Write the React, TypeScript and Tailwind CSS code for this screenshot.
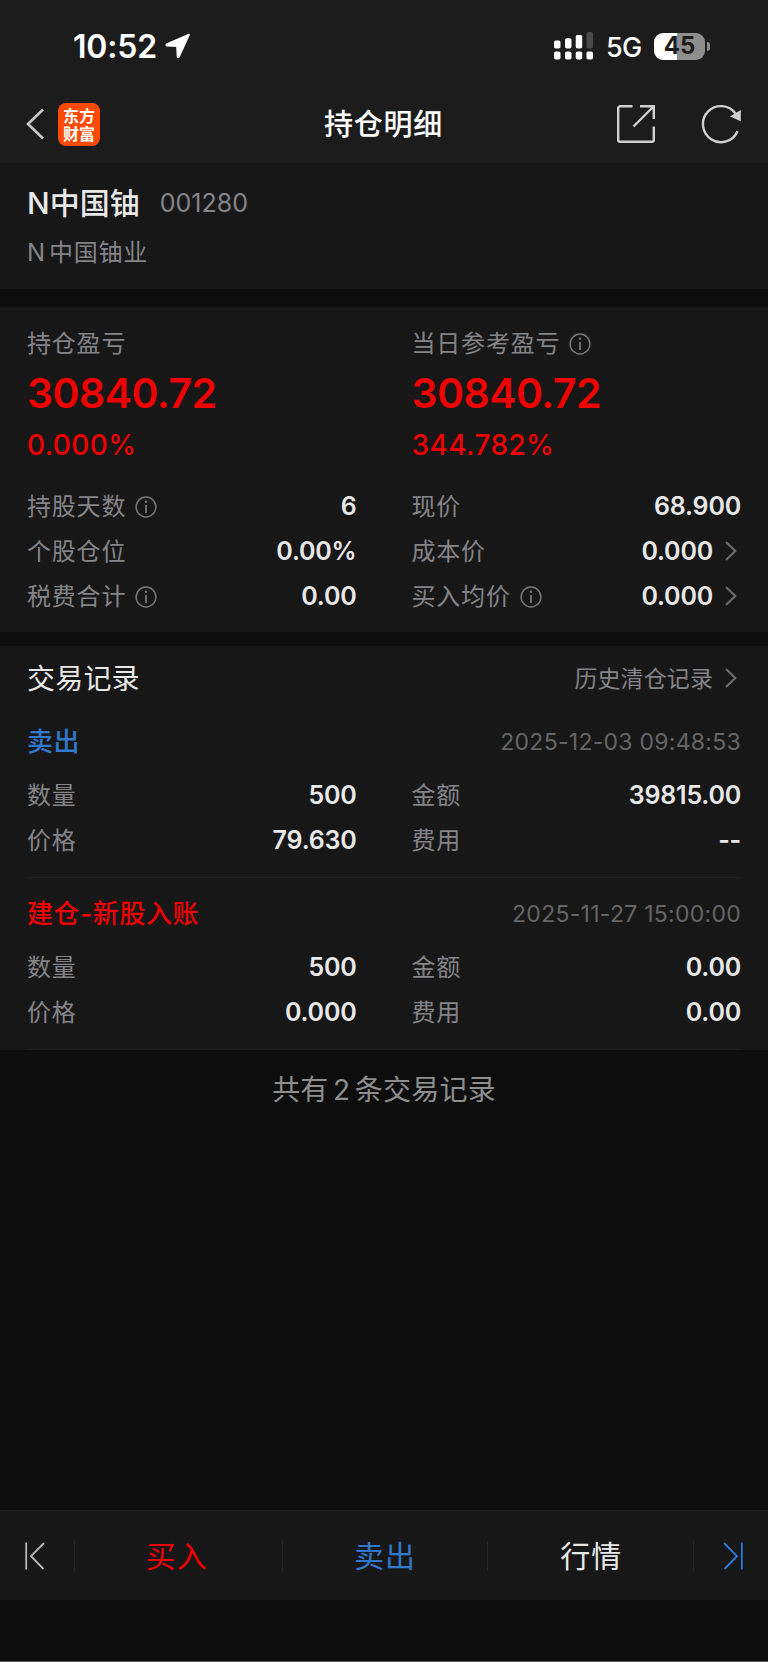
import React from 'react';

interface Field {
  label: string;
  value: string;
  info?: boolean;
  link?: boolean;
}

interface Trade {
  type: string;
  color: string;
  time: string;
  fields: Field[];
}

const positionFields: Field[] = [
  { label: '持股天数', value: '6', info: true },
  { label: '现价', value: '68.900' },
  { label: '个股仓位', value: '0.00%' },
  { label: '成本价', value: '0.000', link: true },
  { label: '税费合计', value: '0.00', info: true },
  { label: '买入均价', value: '0.000', info: true, link: true },
];

const trades: Trade[] = [
  {
    type: '卖出',
    color: 'text-[#2f78cc]',
    time: '2025-12-03 09:48:53',
    fields: [
      { label: '数量', value: '500' },
      { label: '金额', value: '39815.00' },
      { label: '价格', value: '79.630' },
      { label: '费用', value: '--' },
    ],
  },
  {
    type: '建仓-新股入账',
    color: 'text-[#ee0000]',
    time: '2025-11-27 15:00:00',
    fields: [
      { label: '数量', value: '500' },
      { label: '金额', value: '0.00' },
      { label: '价格', value: '0.000' },
      { label: '费用', value: '0.00' },
    ],
  },
];

const InfoIcon = () => (
  <svg className="ml-[9px] size-[22px] shrink-0" viewBox="0 0 22 22" fill="none" stroke="#77777a" strokeWidth="1.5">
    <circle cx="11" cy="11" r="9.9" />
    <path d="M11 9v8" strokeWidth="1.8" />
    <circle cx="11" cy="5.8" r="1.2" fill="#77777a" stroke="none" />
  </svg>
);

const ChevronIcon = () => (
  <svg className="mb-0.5 ml-3 mr-1 h-5 w-3 shrink-0" viewBox="0 0 12 20" fill="none" stroke="#6b6b6b" strokeWidth="2.2">
    <path d="M1 1l9.3 9L1 19" />
  </svg>
);

const StatusBar = () => (
  <div className="flex h-[92px] items-center justify-between pl-[73px] pr-[58px] text-white">
    <div className="flex items-center">
      <span className="pt-[2px] text-[32px] font-semibold leading-none tracking-[-0.2px]">10:52</span>
      <svg className="ml-2 size-[26px]" viewBox="0 0 26 26" fill="#fff">
        <path d="M23.2.9 1.7 10.3C-.3 11.2.3 13.4 2.2 13.5l9 .4.5 9.4c.1 2.1 2.4 2.4 3.2.5L24.6 2.6C25.2 1.2 24.4.4 23.2.9Z" />
      </svg>
    </div>
    <div className="flex items-center">
      <svg className="h-[28px] w-[39px]" viewBox="0 0 39 28" fill="#fff">
        <rect x="0" y="8.5" width="6.5" height="8" rx="1.8" />
        <rect x="11" y="6.3" width="6.5" height="10.2" rx="1.8" />
        <rect x="21.7" y="3" width="6.5" height="13.5" rx="1.8" />
        <rect x="32.5" y="0" width="6.5" height="16.5" rx="1.8" fill="#4a4a4a" />
        <rect x="0" y="19.5" width="6.5" height="8" rx="1.8" />
        <rect x="11" y="19.5" width="6.5" height="8" rx="1.8" />
        <rect x="21.7" y="19.5" width="6.5" height="8" rx="1.8" />
        <rect x="32.5" y="19.5" width="6.5" height="8" rx="1.8" />
      </svg>
      <span className="ml-[13px] w-[36px] pt-[2px] text-[27px] font-medium leading-none tracking-[-0.8px]">5G</span>
      <div className="ml-3 flex h-[27px] w-[51px] items-center justify-center rounded-[9px] bg-linear-to-r from-white from-45% to-[#8e8e8e] to-45% text-[24px] font-bold leading-none text-[#1c1c1c]">
        45
      </div>
      <div className="ml-[2px] h-[9px] w-[3px] rounded-r-full bg-[#8e8e8e]" />
    </div>
  </div>
);

const NavBar = () => (
  <div className="flex h-[64px] items-center justify-between pl-[26px] pr-[27px]">
    <div className="flex w-[150px] items-center">
      <svg className="h-[32px] w-[18px]" viewBox="0 0 18 32" fill="none" stroke="#c8c8c8" strokeWidth="2.6">
        <path d="M17 1.5 2 16l15 14.5" />
      </svg>
      <div className="ml-[14px] flex h-[43px] w-[42px] items-center justify-center rounded-[8px] bg-[#ff4a05]">
        <span className="w-[32px] break-all font-['Noto_Sans_CJK_SC',sans-serif] text-[16px] font-bold leading-[18px] text-white">东方财富</span>
      </div>
    </div>
    <h1 className="text-[29px] font-medium leading-none tracking-[0.8px] text-white">持仓明细</h1>
    <div className="flex w-[150px] items-center justify-end gap-[45px]">
      <svg className="size-[40px]" viewBox="0 0 40 40" fill="none" stroke="#d0d0d0" strokeWidth="2.4">
        <path d="M16.5 2.2H4.2a2 2 0 0 0-2 2v31.6a2 2 0 0 0 2 2h31.6a2 2 0 0 0 2-2V22.5M24 2.2h13.8V15M37.5 2.5 17.5 22.5" />
      </svg>
      <svg className="size-[40px]" viewBox="0 0 40 40" fill="none" stroke="#d0d0d0" strokeWidth="2.4">
        <path d="M36.5 27.2A18 18 0 1 1 34.5 9.5" />
        <path d="M39.8 6v11.2L29 12.5Z" fill="#d0d0d0" stroke="none" />
      </svg>
    </div>
  </div>
);

const FieldGrid: React.FC<{ fields: Field[] }> = ({ fields }) => (
  <div className="grid grid-cols-2 gap-x-[55px]">
    {fields.map((f) => (
      <div key={f.label} className="flex h-[45px] items-center">
        <span className="text-[24px] leading-none tracking-[0.8px] text-[#848488]">{f.label}</span>
        {f.info && <InfoIcon />}
        <span className="ml-auto text-[25px] font-semibold leading-none tracking-[-0.2px] text-[#e8e8e8]">{f.value}</span>
        {f.link && <ChevronIcon />}
      </div>
    ))}
  </div>
);

const Profit: React.FC<{ label: string; amount: string; rate: string; info?: boolean }> = ({ label, amount, rate, info }) => (
  <div>
    <div className="flex h-[37px] items-center">
      <span className="text-[24px] leading-none tracking-[0.8px] text-[#848488]">{label}</span>
      {info && <InfoIcon />}
    </div>
    <p className="h-[63px] text-[41px] font-semibold leading-[62px] tracking-[-0.55px] text-[#ee0000]">{amount}</p>
    <p className="h-[40px] text-[28px] font-medium leading-[40px] tracking-[0.4px] text-[#ee0000]">{rate}</p>
  </div>
);

const TradeItem: React.FC<{ trade: Trade }> = ({ trade }) => (
  <div className="h-[172px] border-b border-[#1f1f1f] pt-[16px]">
    <div className="flex h-[40px] items-center justify-between">
      <span className={`text-[26px] font-medium leading-none tracking-[0.6px] ${trade.color}`}>{trade.type}</span>
      <span className="text-[23px] leading-none tracking-[0.27px] text-[#656565]">{trade.time}</span>
    </div>
    <div className="pt-[11px]">
      <FieldGrid fields={trade.fields} />
    </div>
  </div>
);

const BottomBar = () => (
  <div className="flex h-[90px] items-center border-t border-[#222] bg-[#171717] text-[30px] leading-none tracking-[1px]">
    <div className="flex w-[74px] justify-start pl-[25px]">
      <svg className="h-[28px] w-[20px]" viewBox="0 0 20 28" fill="none" stroke="#b8b8b8" strokeWidth="1.8">
        <path d="M1.2.5v27M19 1 6 14.2 18.5 27" />
      </svg>
    </div>
    <div className="h-[30px] w-px bg-[#262626]" />
    <div className="flex-1 pr-[4px] text-center text-[#ee0000]">买入</div>
    <div className="h-[30px] w-px bg-[#262626]" />
    <div className="flex-1 text-center text-[#2f78cc]">卖出</div>
    <div className="h-[30px] w-px bg-[#262626]" />
    <div className="flex-1 pl-[2px] text-center text-[#e8e8e8]">行情</div>
    <div className="h-[30px] w-px bg-[#262626]" />
    <div className="flex w-[74px] justify-end pr-[25px]">
      <svg className="h-[28px] w-[20px]" viewBox="0 0 20 28" fill="none" stroke="#2b7de0" strokeWidth="1.8">
        <path d="M18.8.5v27M1 1l13 13.2L1.5 27" />
      </svg>
    </div>
  </div>
);

const App: React.FC = () => {
  return (
    <div className="flex h-[1662px] w-[768px] flex-col border-b border-[#5a5a5a] bg-[#0d0d0d] font-['Inter','Noto_Sans_CJK_SC',sans-serif]">
      <header className="h-[163px] bg-[#1c1c1c]">
        <StatusBar />
        <NavBar />
      </header>

      <section className="h-[126px] bg-[#171717] px-[27px] pt-[20px]">
        <div className="flex h-[40px] items-center gap-[20px]">
          <h2 className="text-[30px] font-medium leading-none text-[#e8e8e8]">N中国铀</h2>
          <span className="text-[25px] leading-none text-[#848488]">001280</span>
        </div>
        <p className="mt-[10px] h-[40px] text-[24px] leading-[40px] tracking-[0.8px] text-[#848488]">
          <span className="mr-[3px]">N</span>中国铀业
        </p>
      </section>

      <section className="mt-[18px] h-[325px] bg-[#171717] px-[27px] pt-[18px]">
        <div className="grid grid-cols-2 gap-x-[55px]">
          <Profit label="持仓盈亏" amount="30840.72" rate="0.000%" />
          <Profit label="当日参考盈亏" amount="30840.72" rate="344.782%" info />
        </div>
        <div className="pt-[19px]">
          <FieldGrid fields={positionFields} />
        </div>
      </section>

      <section className="mt-[14px] h-[404px] bg-[#171717] px-[27px] pt-[13px]">
        <div className="flex h-[40px] items-center">
          <h3 className="text-[28px] leading-none tracking-[0.2px] text-[#e8e8e8]">交易记录</h3>
          <span className="ml-auto text-[23px] leading-none tracking-[0.1px] text-[#848488]">历史清仓记录</span>
          <ChevronIcon />
        </div>
        <div className="pt-[7px]">
          {trades.map((t) => (
            <TradeItem key={t.time} trade={t} />
          ))}
        </div>
      </section>

      <p className="pt-[20px] text-center text-[28px] leading-[40px] tracking-[0.2px] text-[#8e8e8e]">
        共有<span className="mx-[4.5px]">2</span>条交易记录
      </p>

      <div className="mb-[61px] mt-auto">
        <BottomBar />
      </div>
    </div>
  );
};

export default App;
